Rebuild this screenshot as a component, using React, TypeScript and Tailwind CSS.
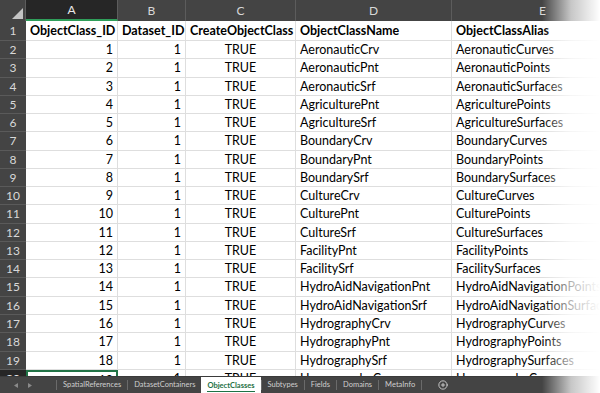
import { CirclePlus } from "lucide-react";

// column widths of the sheet, in px
const cols = [
  { key: "A", w: "w-[92px]", align: "text-right" },
  { key: "B", w: "w-[68px]", align: "text-right" },
  { key: "C", w: "w-[110px]", align: "text-center" },
  { key: "D", w: "w-[156px]", align: "text-left" },
  { key: "E", w: "w-[182px]", align: "text-left" },
];

const names = [
  ["AeronauticCrv", "AeronauticCurves"],
  ["AeronauticPnt", "AeronauticPoints"],
  ["AeronauticSrf", "AeronauticSurfaces"],
  ["AgriculturePnt", "AgriculturePoints"],
  ["AgricultureSrf", "AgricultureSurfaces"],
  ["BoundaryCrv", "BoundaryCurves"],
  ["BoundaryPnt", "BoundaryPoints"],
  ["BoundarySrf", "BoundarySurfaces"],
  ["CultureCrv", "CultureCurves"],
  ["CulturePnt", "CulturePoints"],
  ["CultureSrf", "CultureSurfaces"],
  ["FacilityPnt", "FacilityPoints"],
  ["FacilitySrf", "FacilitySurfaces"],
  ["HydroAidNavigationPnt", "HydroAidNavigationPoints"],
  ["HydroAidNavigationSrf", "HydroAidNavigationSurfaces"],
  ["HydrographyCrv", "HydrographyCurves"],
  ["HydrographyPnt", "HydrographyPoints"],
  ["HydrographySrf", "HydrographySurfaces"],
  ["HypsographyCrv", "HypsographyCurves"],
];

const rows = names.map(([n, a], i) => [String(i + 1), "1", "TRUE", n, a]);

const tabs = [
  "SpatialReferences",
  "DatasetContainers",
  "ObjectClasses",
  "Subtypes",
  "Fields",
  "Domains",
  "MetaInfo",
];

const Cell = ({ i, text, bold }: { i: number; text: string; bold?: boolean }) => (
  <div
    className={`${cols[i].w} ${cols[i].align} shrink-0 border-r border-b border-[#dedede] px-[4px] whitespace-nowrap ${
      i === 4 ? "overflow-visible" : "overflow-hidden"
    } ${bold ? "font-bold" : ""}`}
  >
    {text}
  </div>
);

export default function App() {
  return (
    <div className="relative w-[600px] h-[393px] overflow-hidden bg-white font-['Lato',sans-serif] text-[12.5px] text-black flex flex-col">
      {/* column letters */}
      <div className="flex h-[21px] shrink-0 bg-[#444444] text-[#d8d8d8] text-[12px]">
        <div className="w-[26px] shrink-0 border-r border-[#5c5c5c] flex items-end justify-end pr-[2px] pb-[2px]">
          <svg width="11" height="11" viewBox="0 0 11 11">
            <polygon points="11,0 11,11 0,11" fill="#c4c4c4" />
          </svg>
        </div>
        {cols.map((c) => (
          <div
            key={c.key}
            className={`${c.w} shrink-0 flex items-center justify-center border-r ${
              c.key === "A"
                ? "bg-[#262626] border-[#5c5c5c] border-b-2 border-b-[#2f9e5a] text-[#e8e8e8]"
                : "border-[#5c5c5c]"
            }`}
          >
            {c.key}
          </div>
        ))}
      </div>

      {/* sheet body */}
      <div className="flex-1 overflow-hidden">
        <div className="flex h-[20px] items-center leading-[19px]">
          <div className="w-[26px] h-full shrink-0 bg-[#444444] text-[#d8d8d8] text-[12px] text-center border-b border-[#5a5a5a] leading-[19px]">
            1
          </div>
          {["ObjectClass_ID", "Dataset_ID", "CreateObjectClass", "ObjectClassName", "ObjectClassAlias"].map(
            (t, i) => (
              <div key={t} className="h-full flex">
                <Cell i={i} text={t} bold />
              </div>
            )
          )}
        </div>
        {rows.map((r, ri) => {
          const last = ri === rows.length - 1;
          return (
            <div key={ri} className="flex h-[18.28px] leading-[17.3px]">
              <div
                className={`w-[26px] h-full shrink-0 text-[12px] text-center border-b border-[#5a5a5a] ${
                  last ? "bg-[#262626] text-[#e8e8e8]" : "bg-[#444444] text-[#d8d8d8]"
                }`}
              >
                {ri + 2}
              </div>
              {r.map((t, i) =>
                last && i === 0 ? (
                  <div
                    key={i}
                    className="w-[92px] shrink-0 text-right border-2 border-[#217346] px-[3px]"
                  >
                    {t}
                  </div>
                ) : (
                  <Cell key={i} i={i} text={t} />
                )
              )}
            </div>
          );
        })}
      </div>

      {/* sheet tabs */}
      <div className="flex h-[17px] shrink-0 items-stretch bg-[#444444] text-[#cfcfcf] text-[7.5px] border-t border-[#3a3a3a]">
        <div className="w-[56px] shrink-0 flex items-center gap-[10px] pl-[14px]">
          <svg width="4" height="5" viewBox="0 0 4 5">
            <polygon points="4,0 4,5 0,2.5" fill="#8a8a8a" />
          </svg>
          <svg width="4" height="5" viewBox="0 0 4 5">
            <polygon points="0,0 0,5 4,2.5" fill="#8a8a8a" />
          </svg>
        </div>
        {tabs.map((t) =>
          t === "ObjectClasses" ? (
            <div
              key={t}
              className="flex items-center px-[6px] bg-white text-[#1e7145] font-bold relative"
            >
              <span className="border-b-[1.5px] border-[#1e7145] leading-[9px] pb-[1px] mt-[2px]">
                {t}
              </span>
            </div>
          ) : (
            <div key={t} className="flex items-center">
              <span className="w-px h-[10px] bg-[#6a6a6a]" />
              <span className="px-[6px]">{t}</span>
            </div>
          )
        )}
        <div className="flex items-center">
          <span className="w-px h-[10px] bg-[#6a6a6a]" />
          <span className="pl-[16px] text-[#dcdcdc] flex items-center">
            <CirclePlus size={10} strokeWidth={2} />
          </span>
        </div>
      </div>

      {/* page edge fade */}
      <div className="absolute top-0 right-0 h-full w-[58px] bg-gradient-to-r from-white/0 via-white/70 to-white pointer-events-none" />
    </div>
  );
}
